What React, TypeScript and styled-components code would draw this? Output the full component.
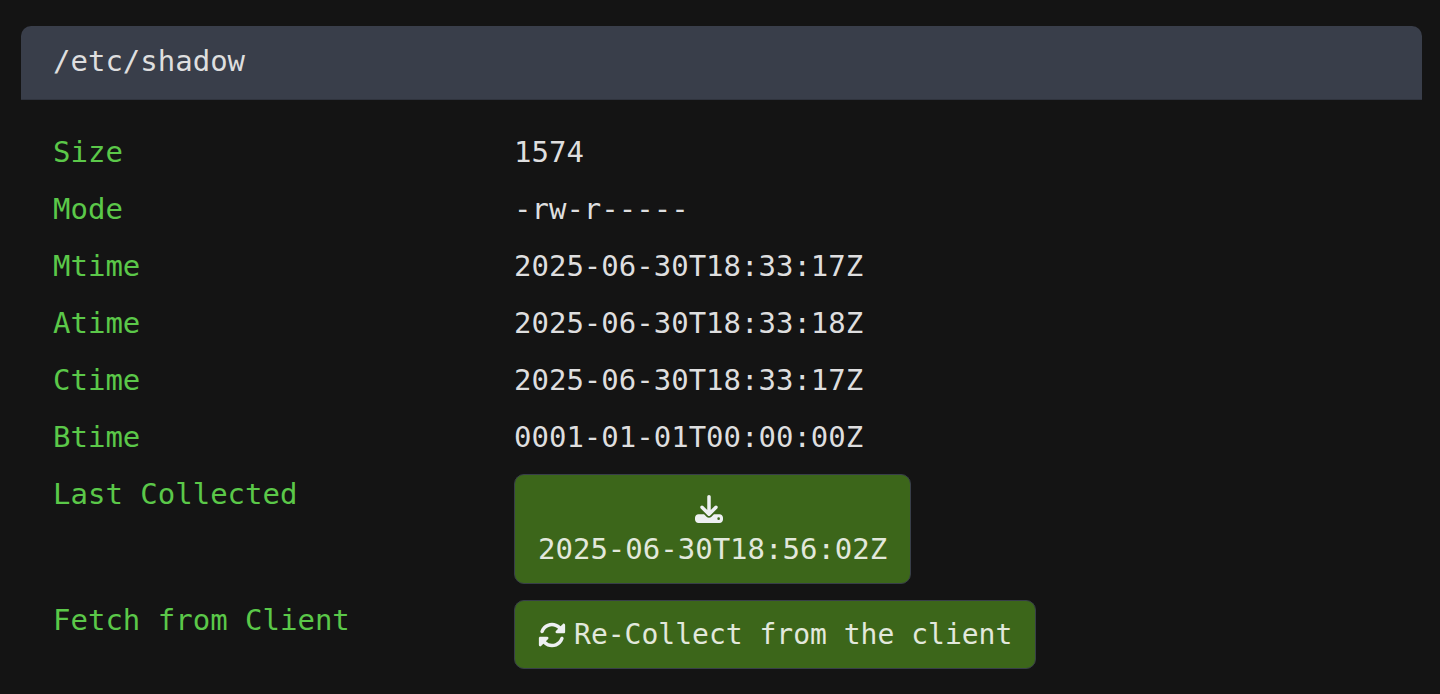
import React from "react";
import styled, { createGlobalStyle, css } from "styled-components";
import { FaDownload, FaRotate } from "react-icons/fa6";

const GlobalStyle = createGlobalStyle`
  * { box-sizing: border-box; }
  body {
    margin: 0;
    background: #141414;
    color: #dededf;
    font-family: "DejaVu Sans Mono", "Liberation Mono", monospace;
    font-size: 29px;
    line-height: 41px;
  }
`;

const Page = styled.main`
  padding: 26px 18px 24px 21px;
`;

const Card = styled.section`
  border-radius: 10px;
  overflow: hidden;
`;

const CardHeader = styled.header`
  padding: 15px 32px 17px;
  background: #393e4a;
  border-bottom: 1px solid #30343e;
`;

const Title = styled.h1`
  margin: 0;
  font-size: inherit;
  font-weight: 400;
`;

const Details = styled.dl`
  display: grid;
  grid-template-columns: 10fr 19fr;
  row-gap: 16px;
  margin: 0;
  padding: 32px 32px 0;
`;

const Term = styled.dt`
  color: #5bc849;
`;

const Value = styled.dd`
  margin: 0;
`;

const ActionButton = styled.button<{ $stacked?: boolean }>`
  display: flex;
  flex-direction: ${(p) => (p.$stacked ? "column" : "row")};
  align-items: center;
  padding: 13px 23px;
  border: 1px solid #383e49;
  border-radius: 10px;
  background: #3c661a;
  color: #e2e8dc;
  font: inherit;
  font-size: ${(p) => (p.$stacked ? "29px" : "28px")};
  white-space: nowrap;
  cursor: pointer;
`;

const IconSlot = styled.span`
  display: flex;
  align-items: center;
  height: 41px;
  padding-right: 8px;
`;

const iconStyle = css`
  width: 28px;
  height: 28px;
  fill: #eef0f2;
`;

const DownloadIcon = styled(FaDownload)`
  ${iconStyle}
`;

const RotateIcon = styled(FaRotate)`
  ${iconStyle}
`;

const attributes = [
  ["Size", "1574"],
  ["Mode", "-rw-r-----"],
  ["Mtime", "2025-06-30T18:33:17Z"],
  ["Atime", "2025-06-30T18:33:18Z"],
  ["Ctime", "2025-06-30T18:33:17Z"],
  ["Btime", "0001-01-01T00:00:00Z"],
];

export default function App() {
  return (
    <>
      <GlobalStyle />
      <Page>
        <Card>
          <CardHeader>
            <Title>/etc/shadow</Title>
          </CardHeader>
          <Details>
            {attributes.map(([name, value]) => (
              <React.Fragment key={name}>
                <Term>{name}</Term>
                <Value>{value}</Value>
              </React.Fragment>
            ))}
            <Term>Last Collected</Term>
            <Value>
              <ActionButton type="button" $stacked>
                <IconSlot>
                  <DownloadIcon aria-hidden="true" />
                </IconSlot>
                2025-06-30T18:56:02Z
              </ActionButton>
            </Value>
            <Term>Fetch from Client</Term>
            <Value>
              <ActionButton type="button">
                <IconSlot>
                  <RotateIcon aria-hidden="true" />
                </IconSlot>
                Re-Collect from the client
              </ActionButton>
            </Value>
          </Details>
        </Card>
      </Page>
    </>
  );
}
